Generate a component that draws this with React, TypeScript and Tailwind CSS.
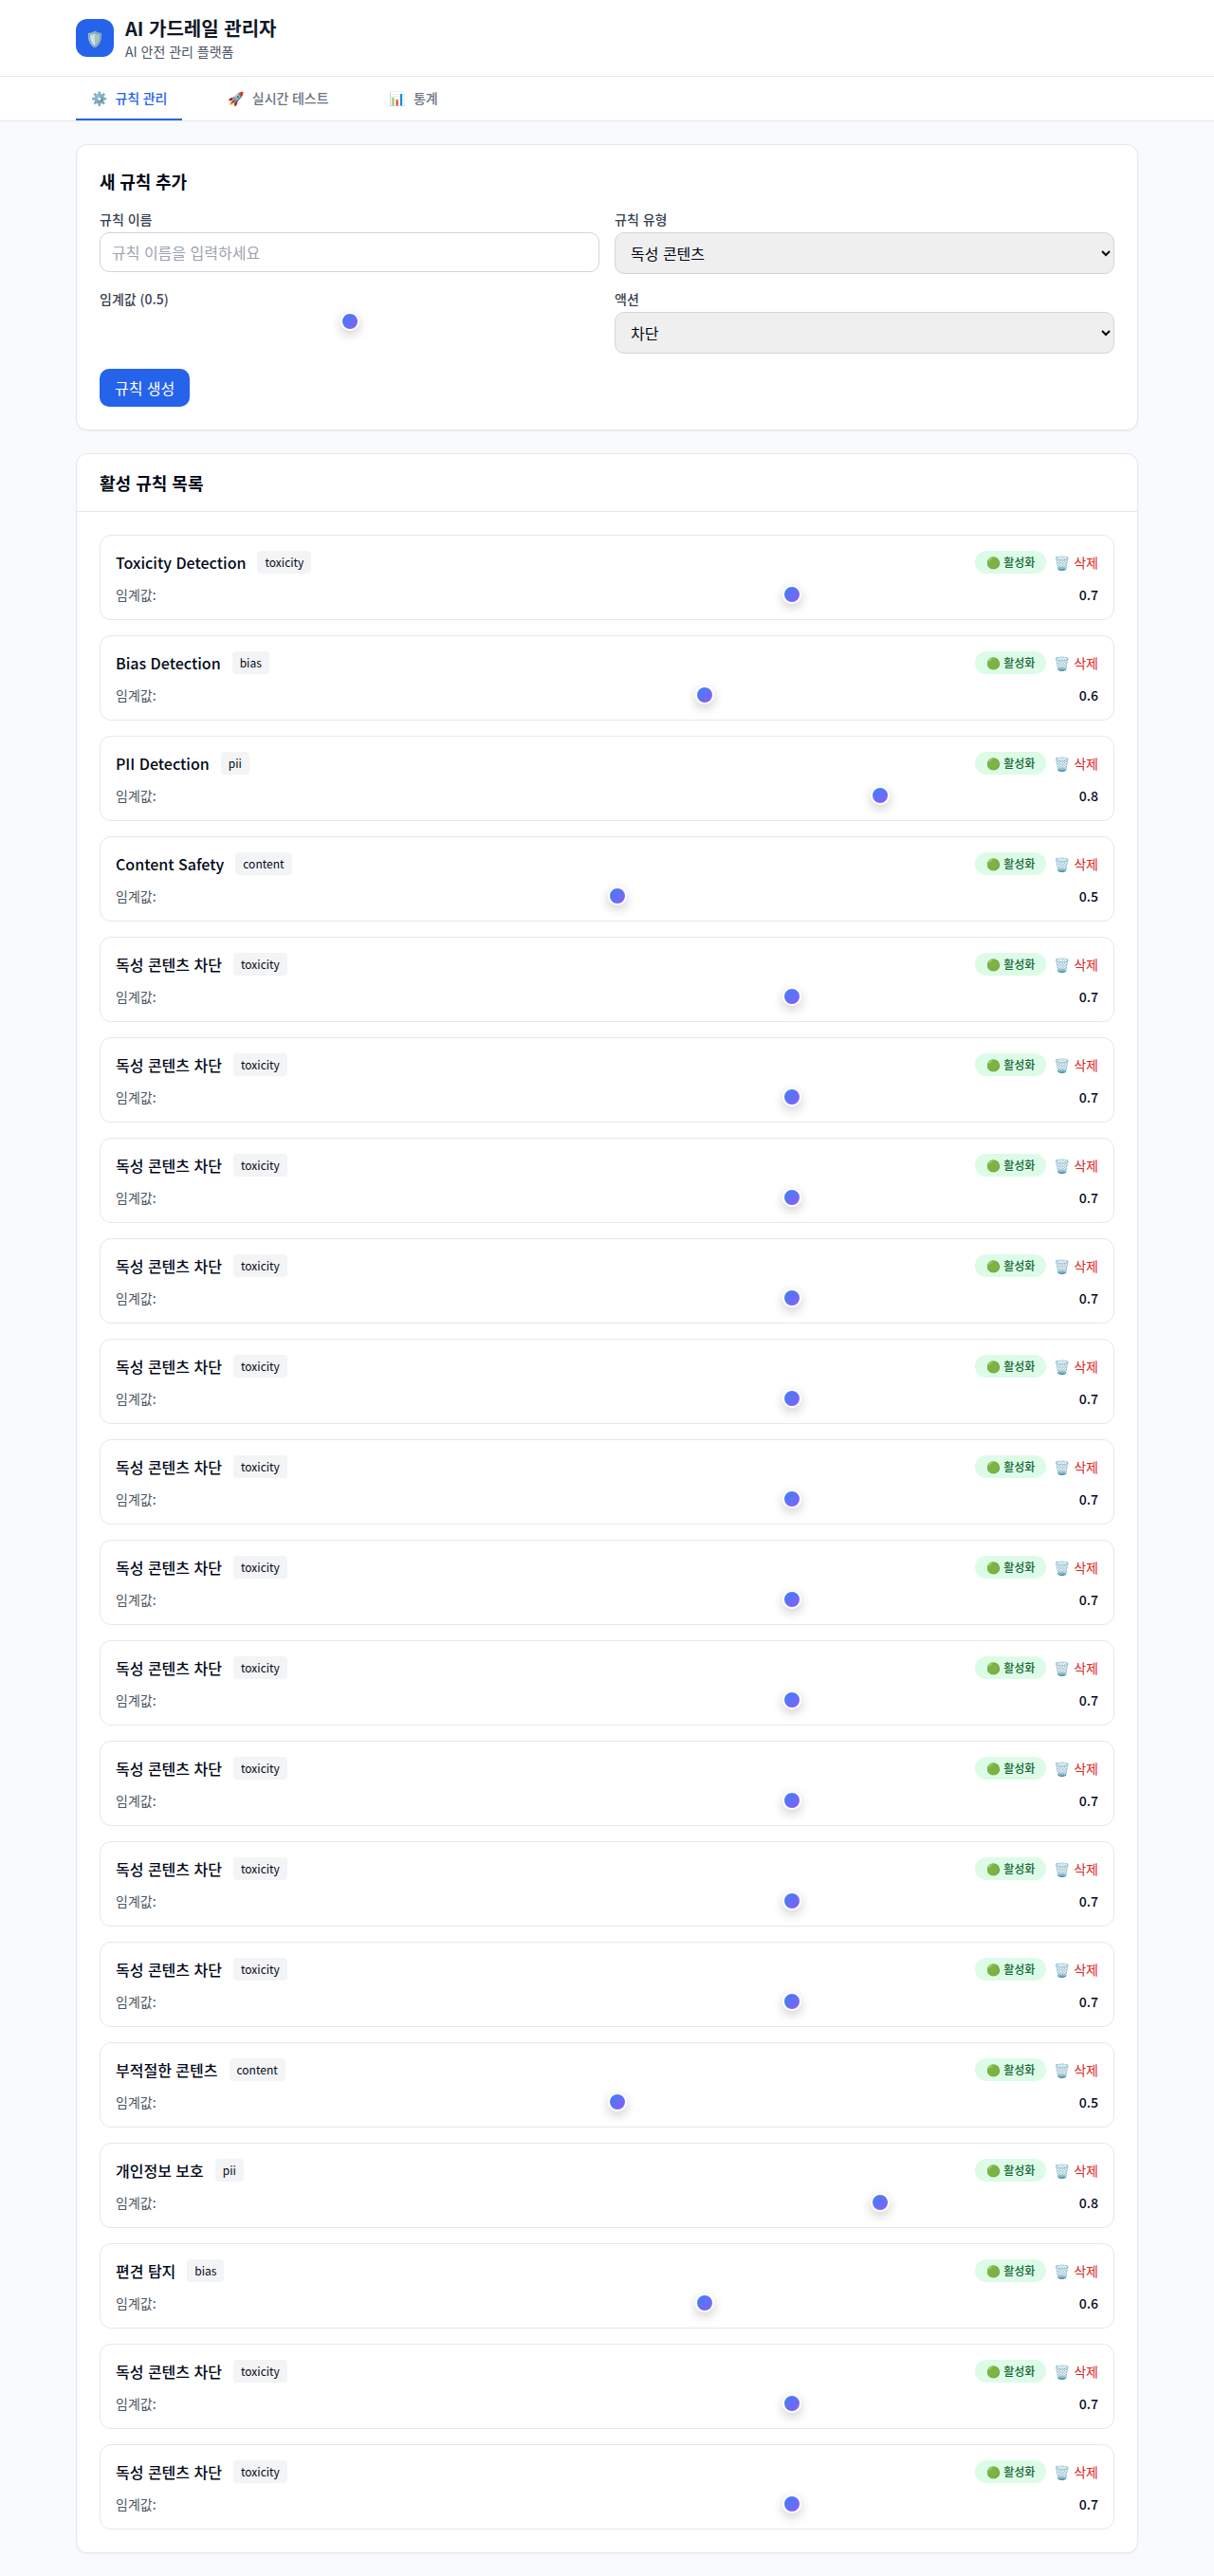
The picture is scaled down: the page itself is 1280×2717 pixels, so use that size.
import { useState } from "react";

type Rule = { name: string; type: string; threshold: number };

const toxic: Rule = { name: "독성 콘텐츠 차단", type: "toxicity", threshold: 0.7 };

const initialRules: Rule[] = [
  { name: "Toxicity Detection", type: "toxicity", threshold: 0.7 },
  { name: "Bias Detection", type: "bias", threshold: 0.6 },
  { name: "PII Detection", type: "pii", threshold: 0.8 },
  { name: "Content Safety", type: "content", threshold: 0.5 },
  ...Array.from({ length: 11 }, () => ({ ...toxic })),
  { name: "부적절한 콘텐츠", type: "content", threshold: 0.5 },
  { name: "개인정보 보호", type: "pii", threshold: 0.8 },
  { name: "편견 탐지", type: "bias", threshold: 0.6 },
  { ...toxic },
  { ...toxic },
];

const tabs = [
  { icon: "⚙️", label: "규칙 관리" },
  { icon: "🚀", label: "실시간 테스트" },
  { icon: "📊", label: "통계" },
];

function Slider({ value, onChange }: { value: number; onChange: (v: number) => void }) {
  return (
    <input
      type="range"
      min={0}
      max={1}
      step={0.1}
      value={value}
      onChange={(e) => onChange(Number(e.target.value))}
      className="block h-5 w-full min-w-0 flex-1 cursor-pointer appearance-none bg-transparent [&::-webkit-slider-thumb]:size-5 [&::-webkit-slider-thumb]:appearance-none [&::-webkit-slider-thumb]:rounded-full [&::-webkit-slider-thumb]:border-2 [&::-webkit-slider-thumb]:border-white [&::-webkit-slider-thumb]:bg-[linear-gradient(135deg,#3b82f6,#8b5cf6)] [&::-webkit-slider-thumb]:shadow-[0_4px_12px_rgba(0,0,0,0.2)]"
    />
  );
}

function RuleRow({ rule, onChange, onDelete }: { rule: Rule; onChange: (v: number) => void; onDelete: () => void }) {
  return (
    <div className="rounded-xl border border-[#e2e8f0] p-4">
      <div className="mb-3 flex items-center justify-between">
        <div className="flex items-center gap-3">
          <h4 className="font-medium [word-spacing:0.054em]">{rule.name}</h4>
          <span className="rounded bg-[#f3f4f6] px-2 py-1 text-xs">{rule.type}</span>
        </div>
        <div className="flex items-center gap-2">
          <button className="rounded-full bg-[#dcfce7] px-3 py-1 text-xs font-medium text-[#166534] [word-spacing:0.02em]">
            🟢 활성화
          </button>
          <button onClick={onDelete} className="text-sm text-[#dc2626] [word-spacing:0.02em]">
            🗑️ 삭제
          </button>
        </div>
      </div>
      <div className="flex items-center gap-4">
        <span className="text-sm text-[#4b5563]">임계값:</span>
        <Slider value={rule.threshold} onChange={onChange} />
        <span className="text-sm font-medium">{rule.threshold}</span>
      </div>
    </div>
  );
}

export default function App() {
  const [rules, setRules] = useState(initialRules);
  const [active, setActive] = useState(0);
  const [threshold, setThreshold] = useState(0.5);
  const [name, setName] = useState("");

  const labelClass = "mb-1 block text-sm font-medium text-[#374151] [word-spacing:0.054em]";
  const selectClass =
    "block h-11 w-full rounded-[10px] border border-[#d1d5db] bg-[#efefef] px-3 py-2 [word-spacing:0.054em]";

  return (
    <div className="min-h-screen bg-[#f8fafc] font-['Noto_Sans_CJK_KR','Noto_Color_Emoji',sans-serif] text-[#020817]">
      <header className="border-b border-[#e2e8f0] bg-white">
        <div className="mx-auto flex max-w-6xl items-center gap-3 px-4 py-4">
          <div className="flex size-10 items-center justify-center rounded-xl bg-[#2563eb] text-white">🛡️</div>
          <div>
            <h1 className="text-xl font-bold text-[#111827] [word-spacing:0.054em]">AI 가드레일 관리자</h1>
            <p className="text-sm text-[#4b5563] [word-spacing:0.054em]">AI 안전 관리 플랫폼</p>
          </div>
        </div>
      </header>

      <nav className="border-b border-[#e2e8f0] bg-white">
        <div className="mx-auto flex max-w-6xl gap-8 px-4">
          {tabs.map((tab, i) => (
            <button
              key={tab.label}
              onClick={() => setActive(i)}
              className={
                i === active
                  ? "border-b-2 border-[#2563eb] px-4 py-3 text-sm font-medium text-[#2563eb] [word-spacing:0.02em]"
                  : "border-b-2 border-transparent px-4 py-3 text-sm font-medium text-[#6b7280] [word-spacing:0.02em]"
              }
            >
              <span className="mr-2">{tab.icon}</span>
              {tab.label}
            </button>
          ))}
        </div>
      </nav>

      <main className="mx-auto max-w-6xl space-y-6 px-4 py-6">
        <section className="rounded-xl border border-[#e2e8f0] bg-white p-6 shadow-[0_1px_2px_rgba(0,0,0,0.05)]">
          <h3 className="mb-4 text-lg font-semibold [word-spacing:0.03em]">새 규칙 추가</h3>
          <div className="mb-4 grid grid-cols-2 gap-4">
            <div>
              <label className={labelClass}>규칙 이름</label>
              <input
                value={name}
                onChange={(e) => setName(e.target.value)}
                placeholder="규칙 이름을 입력하세요"
                className="block w-full rounded-[10px] border border-[#d1d5db] px-3 py-2 [word-spacing:0.054em] placeholder:text-[#9ca3af]"
              />
            </div>
            <div>
              <label className={labelClass}>규칙 유형</label>
              <select className={selectClass}>
                <option>독성 콘텐츠</option>
              </select>
            </div>
            <div>
              <label className={labelClass}>임계값 ({threshold})</label>
              <Slider value={threshold} onChange={setThreshold} />
            </div>
            <div>
              <label className={labelClass}>액션</label>
              <select className={selectClass}>
                <option>차단</option>
              </select>
            </div>
          </div>
          <button className="block rounded-[10px] bg-[#2563eb] px-4 py-2 text-white [word-spacing:0.04em]">규칙 생성</button>
        </section>

        <section className="rounded-xl border border-[#e2e8f0] bg-white shadow-[0_1px_2px_rgba(0,0,0,0.05)]">
          <div className="border-b border-[#e2e8f0] px-6 py-4">
            <h3 className="text-lg font-semibold [word-spacing:0.054em]">활성 규칙 목록</h3>
          </div>
          <div className="space-y-4 p-6">
            {rules.map((rule, i) => (
              <RuleRow
                key={i}
                rule={rule}
                onChange={(v) => setRules(rules.map((r, j) => (j === i ? { ...r, threshold: v } : r)))}
                onDelete={() => setRules(rules.filter((_, j) => j !== i))}
              />
            ))}
          </div>
        </section>
      </main>
    </div>
  );
}
